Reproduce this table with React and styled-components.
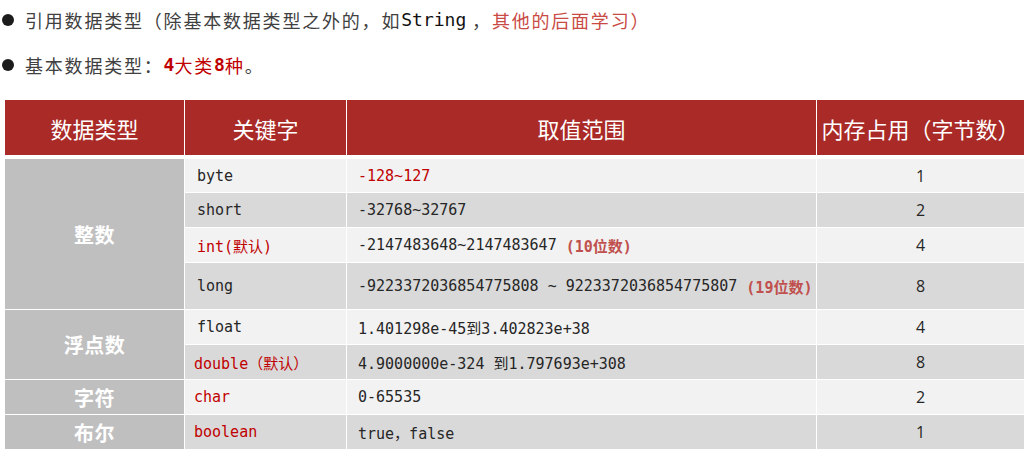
import { createGlobalStyle, styled } from 'styled-components';

const GlobalStyle = createGlobalStyle`
  body {
    margin: 0;
    background: #fff;
    font-family: "Noto Sans CJK SC", "Noto Sans", sans-serif;
  }
`;

const Page = styled.div`
  width: 1034px;
  height: 459px;
  overflow: hidden;
`;

const Line = styled.div`
  display: flex;
  align-items: center;
  height: 39px;
  font-size: 18px;
  letter-spacing: 1.8px;
  color: #404040;
  white-space: pre;
  & + & {
    margin-top: 6px;
  }
`;

const Dot = styled.span`
  flex: none;
  width: 12px;
  height: 12px;
  border-radius: 50%;
  background: #1c1c1c;
  margin: 0 11px 0 2px;
`;

const Mono = styled.span`
  font-family: "DejaVu Sans Mono", "Liberation Mono", monospace;
  font-size: 18px;
  letter-spacing: 0;
  font-weight: ${p => (p.$bold ? 700 : 400)};
  color: ${p => p.$color || '#111'};
`;

const Tint = styled.span`
  color: ${p => p.$color};
`;

const Grid = styled.div`
  display: grid;
  grid-template-columns: 179px 161px 469px 207px;
  grid-template-rows: 58px 33px 34px 34px 46px 34px 34px 34px 34px;
  gap: 1px;
  width: 1019px;
  margin: 16px 0 0 5px;
`;

const HeadCell = styled.div`
  display: flex;
  align-items: center;
  justify-content: center;
  margin-bottom: 3px;
  background: #a92a27;
  color: #fff;
  font-size: 22px;
  white-space: nowrap;
`;

const Category = styled.div`
  grid-row: span ${p => p.$span};
  display: flex;
  align-items: center;
  justify-content: center;
  background: #bfbfbf;
  color: #fff;
  font-size: 20px;
  font-weight: 700;
  letter-spacing: 0.5px;
`;

const Cell = styled.div`
  display: flex;
  align-items: center;
  padding-left: ${p => p.$pad}px;
  background: ${p => (p.$alt ? '#d9d9d9' : '#f2f2f2')};
  font-family: "DejaVu Sans Mono", "Liberation Mono", "Noto Sans CJK SC", monospace;
  font-size: 15px;
  color: ${p => (p.$red ? '#c00000' : '#262626')};
  white-space: pre;
`;

const Size = styled.div`
  display: flex;
  align-items: center;
  justify-content: center;
  background: ${p => (p.$alt ? '#d9d9d9' : '#f2f2f2')};
  font-family: "Open Sans", "Noto Sans", sans-serif;
  font-size: 16px;
  color: #262626;
`;

const Note = styled.span`
  color: #c0504d;
  font-weight: 700;
`;

const Red = styled.span`
  color: #c00000;
`;

const rows = [
  { cat: '整数', span: 4, key: 'byte', range: <Red>-128~127</Red>, size: 1 },
  { key: 'short', range: '-32768~32767', size: 2 },
  { key: 'int(默认)', red: true, range: <>-2147483648~2147483647 <Note>(10位数)</Note></>, size: 4 },
  { key: 'long', range: <>-9223372036854775808 ~ 9223372036854775807 <Note>(19位数)</Note></>, size: 8 },
  { cat: '浮点数', span: 2, key: 'float', range: '1.401298e-45到3.402823e+38', size: 4 },
  { key: 'double（默认）', red: true, tight: true, range: '4.9000000e-324 到1.797693e+308', size: 8 },
  { cat: '字符', span: 1, key: 'char', red: true, tight: true, range: '0-65535', size: 2 },
  { cat: '布尔', span: 1, key: 'boolean', red: true, tight: true, range: 'true，false', size: 1 },
];

export default function App() {
  return (
    <Page>
      <GlobalStyle />
      <Line>
        <Dot />
        引用数据类型（除基本数据类型之外的，如<Mono>String</Mono> ，<Tint $color="#c94a44">其他的后面学习）</Tint>
      </Line>
      <Line>
        <Dot />
        基本数据类型：<Mono $bold $color="#c00000">4</Mono>
        <Tint $color="#c00000">大类</Tint>
        <Mono $bold $color="#c00000">8</Mono>
        <Tint $color="#c00000">种</Tint>。
      </Line>
      <Grid>
        <HeadCell>数据类型</HeadCell>
        <HeadCell>关键字</HeadCell>
        <HeadCell>取值范围</HeadCell>
        <HeadCell>内存占用（字节数）</HeadCell>
        {rows.map((r, i) => {
          const alt = i % 2 === 1;
          return [
            r.cat && <Category key={`c${i}`} $span={r.span}>{r.cat}</Category>,
            <Cell key={`k${i}`} $alt={alt} $red={r.red} $pad={r.tight ? 9 : 12}>{r.key}</Cell>,
            <Cell key={`r${i}`} $alt={alt} $pad={11}>{r.range}</Cell>,
            <Size key={`s${i}`} $alt={alt}>{r.size}</Size>,
          ];
        })}
      </Grid>
    </Page>
  );
}
